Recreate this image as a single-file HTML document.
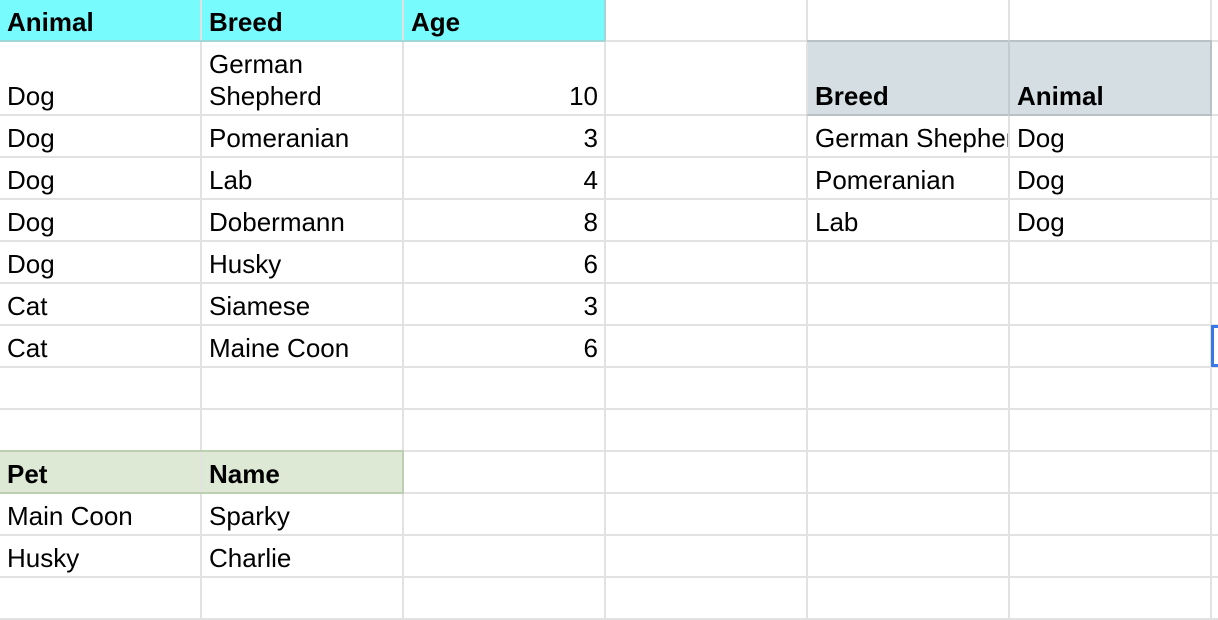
<!DOCTYPE html>
<html><head><meta charset="utf-8"><style>
body{margin:0;width:1218px;height:620px;overflow:hidden;background:#fff;position:relative;font-family:"Liberation Sans",Arial,sans-serif;font-size:26px;color:#000}
.f{position:absolute}
.v{position:absolute;top:0;width:2px;height:620px;background:#e2e2e2}
.h{position:absolute;left:0;height:2px;width:1218px;background:#e2e2e2}
.t{position:absolute;line-height:32px;white-space:nowrap;margin-top:1px}
.b{font-weight:bold}
.r{text-align:right;width:190px}
</style></head><body>
<div class="f" style="left:0;top:0;width:605px;height:41px;background:#77fbfd"></div>
<div class="f" style="left:807px;top:41px;width:404px;height:74px;background:#d5dfe3"></div>
<div class="f" style="left:0;top:451px;width:403px;height:42px;background:#dde9d5"></div>

<div class="v" style="left:200px"></div><div class="v" style="left:402px"></div><div class="v" style="left:604px"></div><div class="v" style="left:806px"></div><div class="v" style="left:1008px"></div><div class="v" style="left:1210px"></div>
<div class="h" style="top:40px"></div><div class="h" style="top:114px"></div><div class="h" style="top:156px"></div><div class="h" style="top:198px"></div><div class="h" style="top:240px"></div><div class="h" style="top:282px"></div><div class="h" style="top:324px"></div><div class="h" style="top:366px"></div><div class="h" style="top:408px"></div><div class="h" style="top:450px"></div><div class="h" style="top:492px"></div><div class="h" style="top:534px"></div><div class="h" style="top:576px"></div><div class="h" style="top:618px"></div>
<div class="f" style="left:0;top:40px;width:605px;height:2px;background:#9fd6d8"></div>
<div class="f" style="left:604px;top:0;width:2px;height:41px;background:#9fd6d8"></div>
<div class="f" style="left:807px;top:40px;width:404px;height:2px;background:#b8c2c5"></div>
<div class="f" style="left:807px;top:114px;width:404px;height:2px;background:#b8c2c5"></div>
<div class="f" style="left:1210px;top:40px;width:2px;height:76px;background:#b8c2c5"></div>
<div class="f" style="left:1008px;top:40px;width:2px;height:76px;background:#c2cccf"></div>
<div class="f" style="left:0;top:450px;width:403px;height:2px;background:#bccfb2"></div>
<div class="f" style="left:0;top:492px;width:403px;height:2px;background:#bccfb2"></div>
<div class="f" style="left:402px;top:450px;width:2px;height:44px;background:#bccfb2"></div>
<div class="f" style="left:1211px;top:325px;width:3px;height:42px;background:#3b78e7"></div>
<div class="f" style="left:1211px;top:325px;width:7px;height:3px;background:#3b78e7"></div>
<div class="f" style="left:1211px;top:364px;width:7px;height:3px;background:#3b78e7"></div>

<div class="t b" style="left:7px;top:5px">Animal</div>
<div class="t b" style="left:209px;top:5px">Breed</div>
<div class="t b" style="left:411px;top:5px">Age</div>

<div class="t" style="left:7px;top:79px">Dog</div>
<div class="t" style="left:209px;top:47px">German</div>
<div class="t" style="left:209px;top:79px">Shepherd</div>
<div class="t r" style="left:408px;top:79px">10</div>

<div class="t" style="left:7px;top:121px">Dog</div><div class="t" style="left:209px;top:121px">Pomeranian</div><div class="t r" style="left:408px;top:121px">3</div>
<div class="t" style="left:7px;top:163px">Dog</div><div class="t" style="left:209px;top:163px">Lab</div><div class="t r" style="left:408px;top:163px">4</div>
<div class="t" style="left:7px;top:205px">Dog</div><div class="t" style="left:209px;top:205px">Dobermann</div><div class="t r" style="left:408px;top:205px">8</div>
<div class="t" style="left:7px;top:247px">Dog</div><div class="t" style="left:209px;top:247px">Husky</div><div class="t r" style="left:408px;top:247px">6</div>
<div class="t" style="left:7px;top:289px">Cat</div><div class="t" style="left:209px;top:289px">Siamese</div><div class="t r" style="left:408px;top:289px">3</div>
<div class="t" style="left:7px;top:331px">Cat</div><div class="t" style="left:209px;top:331px">Maine Coon</div><div class="t r" style="left:408px;top:331px">6</div>

<div class="t b" style="left:815px;top:79px">Breed</div>
<div class="t b" style="left:1017px;top:79px">Animal</div>
<div class="t" style="left:815px;top:121px;width:193px;overflow:hidden">German Shepherd</div><div class="t" style="left:1017px;top:121px">Dog</div>
<div class="t" style="left:815px;top:163px">Pomeranian</div><div class="t" style="left:1017px;top:163px">Dog</div>
<div class="t" style="left:815px;top:205px">Lab</div><div class="t" style="left:1017px;top:205px">Dog</div>

<div class="t b" style="left:7px;top:457px">Pet</div>
<div class="t b" style="left:209px;top:457px">Name</div>
<div class="t" style="left:7px;top:499px">Main Coon</div><div class="t" style="left:209px;top:499px">Sparky</div>
<div class="t" style="left:7px;top:541px">Husky</div><div class="t" style="left:209px;top:541px">Charlie</div>
</body></html>
